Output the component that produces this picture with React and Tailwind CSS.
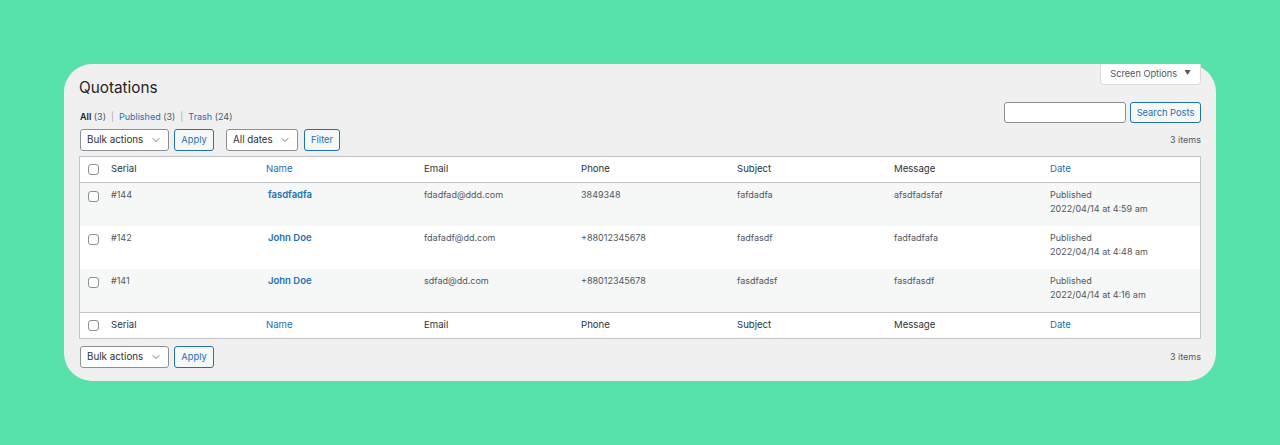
import { ChevronDown } from "lucide-react";

const rows = [
  { id: "#144", name: "fasdfadfa", email: "fdadfad@ddd.com", phone: "3849348", subject: "fafdadfa", message: "afsdfadsfaf", date: "2022/04/14 at 4:59 am" },
  { id: "#142", name: "John Doe", email: "fdafadf@dd.com", phone: "+88012345678", subject: "fadfasdf", message: "fadfadfafa", date: "2022/04/14 at 4:48 am" },
  { id: "#141", name: "John Doe", email: "sdfad@dd.com", phone: "+88012345678", subject: "fasdfadsf", message: "fasdfasdf", date: "2022/04/14 at 4:16 am" },
];

const cols = "grid grid-cols-[31px_155px_158px_157px_156px_157px_156px_1fr]";

function Checkbox() {
  return <span className="block w-[11px] h-[11px] rounded-[3px] border border-[#8c8f94] bg-white" />;
}

function Select({ label, width }) {
  return (
    <div className={`${width} h-[22px] flex items-center justify-between pl-[6px] pr-[6px] bg-white border border-[#8c8f94] rounded-[3px] text-[9.8px] text-[#2c3338]`}>
      <span>{label}</span>
      <ChevronDown size={12} strokeWidth={1.6} className="text-[#50575e]" />
    </div>
  );
}

function Button({ label, width }) {
  return (
    <div className={`${width} flex items-center justify-center bg-[#f6f7f7] border border-[#2271b1] rounded-[3px] text-[9.3px] text-[#2271b1]`}>
      {label}
    </div>
  );
}

function HeadRow({ top }) {
  return (
    <div className={`${cols} h-[26px] items-center bg-white text-[9.6px] text-[#2c3338] ${top ? "border-b" : "border-t"} border-[#c3c4c7]`}>
      <div className="pl-[8px]"><Checkbox /></div>
      <div>Serial</div>
      <div className="text-[#2271b1]">Name</div>
      <div>Email</div>
      <div>Phone</div>
      <div>Subject</div>
      <div>Message</div>
      <div className="text-[#2271b1]">Date</div>
    </div>
  );
}

export default function App() {
  return (
    <div className="w-full h-[445px] bg-[#57e2aa] px-16 pt-16" style={{ fontFamily: "Inter, 'Noto Sans', sans-serif" }}>
      <div className="h-[317px] rounded-[28px] bg-[#f0f0f1] px-[15px]">
        {/* title + screen options */}
        <div className="h-[38px] flex justify-between items-start">
          <h1 className="mt-[14px] leading-[20px] text-[15.3px] text-[#1d2327]">Quotations</h1>
          <div className="w-[101px] h-[21px] flex items-center justify-center gap-[7px] bg-white border border-t-0 border-[#dcdcde] rounded-b-[4px] text-[9.2px] text-[#50575e]">
            Screen Options
            <span className="text-[6.5px]">▼</span>
          </div>
        </div>

        {/* views + search */}
        <div className="h-[21px] flex justify-between items-end">
          <div className="leading-[12px] text-[9px] text-[#50575e] pl-[1px]">
            <span className="text-[#1d2327] font-semibold">All</span> (3)
            <span className="mx-[5px] text-[#a7aaad]">|</span>
            <span className="text-[#2271b1]">Published</span> (3)
            <span className="mx-[5px] text-[#a7aaad]">|</span>
            <span className="text-[#2271b1]">Trash</span> (24)
          </div>
          <div className="flex gap-[4px]">
            <div className="w-[122px] h-[21px] bg-white border border-[#8c8f94] rounded-[3px]" />
            <Button label="Search Posts" width="w-[71px] h-[21px]" />
          </div>
        </div>

        {/* top tablenav */}
        <div className="mt-[6px] flex items-center pl-[1px]">
          <Select label="Bulk actions" width="w-[89px]" />
          <div className="ml-[5px]"><Button label="Apply" width="w-[40px] h-[22px]" /></div>
          <div className="ml-[12px]"><Select label="All dates" width="w-[72px]" /></div>
          <div className="ml-[6px]"><Button label="Filter" width="w-[36px] h-[22px]" /></div>
          <div className="ml-auto text-[9px] text-[#50575e]">3 items</div>
        </div>

        {/* table */}
        <div className="mt-[5px] border border-[#c3c4c7]">
          <HeadRow top />
          {rows.map((r, i) => (
            <div key={r.id} className={`${cols} h-[43px] pt-[5px] text-[9px] leading-[14px] text-[#50575e] ${i % 2 === 0 ? "bg-[#f6f7f7]" : "bg-white"}`}>
              <div className="pl-[8px] pt-[3px]"><Checkbox /></div>
              <div>{r.id}</div>
              <div className="pl-[2px] font-semibold text-[9.5px] text-[#2271b1]">{r.name}</div>
              <div>{r.email}</div>
              <div>{r.phone}</div>
              <div>{r.subject}</div>
              <div>{r.message}</div>
              <div>
                Published
                <br />
                {r.date}
              </div>
            </div>
          ))}
          <HeadRow />
        </div>

        {/* bottom tablenav */}
        <div className="mt-[7px] flex items-center pl-[1px]">
          <Select label="Bulk actions" width="w-[89px]" />
          <div className="ml-[5px]"><Button label="Apply" width="w-[40px] h-[22px]" /></div>
          <div className="ml-auto text-[9px] text-[#50575e]">3 items</div>
        </div>
      </div>
    </div>
  );
}
